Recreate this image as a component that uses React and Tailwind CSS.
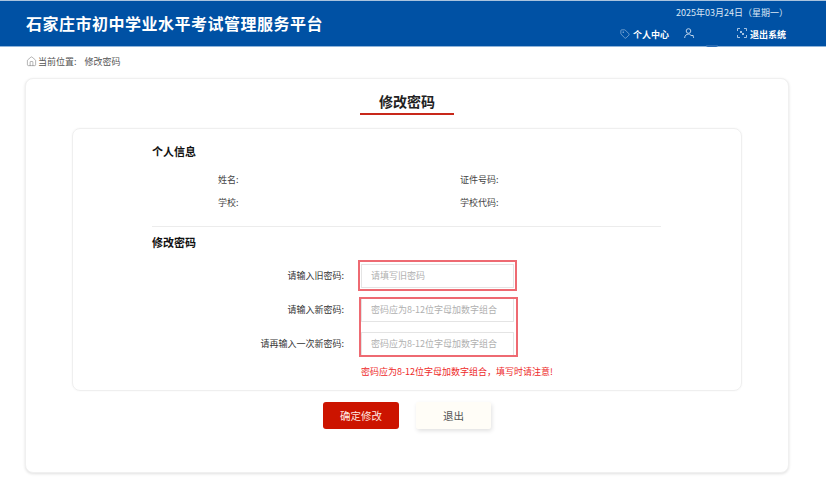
import { Home, Tag } from 'lucide-react';

const INFO_ROWS = [
  ['姓名:', '证件号码:'],
  ['学校:', '学校代码:'],
];

function PasswordRow({ label, placeholder }) {
  return (
    <div className="flex h-[24px] items-center">
      <label className="w-[192px] text-right text-[9px] text-[#333]">{label}</label>
      <div className="ml-[17px] flex h-full w-[153px] items-center border border-[#e4e4e4] bg-white pl-[9px] text-[9px] text-[#b0b0b0]">
        {placeholder}
      </div>
    </div>
  );
}

function UserIcon() {
  return (
    <svg width="11" height="11" viewBox="0 0 11 11" fill="none" stroke="currentColor" strokeWidth="0.9" className="ml-[15px] -translate-y-[2px] text-[#cfe0f2]">
      <circle cx="4.5" cy="3" r="2.3" />
      <path d="M0.7 10c0-2.4 1.6-3.9 3.8-3.9 0.8 0 1.4 0.2 2 0.5" />
      <path d="M6.5 7.5h3M8 7.5c1 0 1.6 0.9 1.6 2.4" />
    </svg>
  );
}

function ExitIcon() {
  return (
    <svg width="10" height="10" viewBox="0 0 10 10" fill="none" stroke="currentColor" strokeWidth="0.8" className="ml-[42px] mr-[3px] -translate-y-[2px] text-[#cfe0f2]">
      <path d="M0.5 3V0.5H3M7 0.5h2.5V3M9.5 7v2.5H7M3 9.5H0.5V7" />
      <path d="M3 3l1.5 1.5M4.5 3v1.5H3M7 7L5.5 5.5M5.5 7V5.5H7" />
    </svg>
  );
}

export default function App() {
  return (
    <div className="h-[481px] w-[826px] overflow-hidden bg-white font-['Noto_Sans_CJK_SC','Liberation_Sans',sans-serif]">
      {/* Header */}
      <header className="relative flex h-[47px] items-start justify-between border-y border-t-[#a9c3de] border-b-[#8fb4da] bg-[#0051a4] pl-[26px] pr-[40px]">
        <h1 className="mt-[12px] text-[16px] font-bold leading-[20px] tracking-[0.5px] text-white">
          石家庄市初中学业水平考试管理服务平台
        </h1>
        <div className="flex flex-col items-end text-white">
          <p className="-mr-[2px] mt-[5px] text-[9px] leading-[14px] text-[#dbe7f5]">2025年03月24日（星期一）</p>
          <div className="mt-[9px] flex items-center text-[9px] font-bold leading-[12px]">
            <Tag size={10} strokeWidth={1.2} className="mr-[3px] -translate-y-[1px] text-[#cfe0f2]" />
            <span>个人中心</span>
            <UserIcon />
            <ExitIcon />
            <span>退出系统</span>
          </div>
        </div>
        <div className="absolute left-[706px] top-[44px] h-[2px] w-[12px] rounded-b-full bg-[#2a6cb4]" />
      </header>

      {/* Breadcrumb */}
      <div className="flex h-[31px] items-center pb-[2px] pl-[26px] text-[9px] text-[#555]">
        <Home size={11} strokeWidth={1.2} className="mr-[1px] text-[#777]" />
        <span>当前位置:</span>
        <span className="ml-[8px]">修改密码</span>
      </div>

      {/* Card */}
      <main className="ml-[25px] h-[395px] w-[764px] rounded-[8px] border border-[#f0f0f0] bg-white pt-[12px] shadow-[0_1px_3px_rgba(0,0,0,0.12)]">
        <div className="flex flex-col items-center">
          <h2 className="text-[14px] font-bold leading-[20px] text-[#222]">修改密码</h2>
          <div className="mt-[2px] h-[2px] w-[94px] bg-[#c8281a]" />
        </div>

        <section className="ml-[46px] mt-[13px] h-[263px] w-[670px] rounded-[8px] border border-[#efefef] pl-[79px] pt-[15px] shadow-[0_0_2px_rgba(0,0,0,0.05)]">
          <h3 className="text-[11px] font-bold leading-[14px] text-[#111]">个人信息</h3>

          <div className="mt-[17px] flex flex-col gap-[13px] pl-[66px]">
            {INFO_ROWS.map(([left, right]) => (
              <div key={left} className="flex text-[9px] leading-[10px] text-[#444]">
                <span className="w-[242px]">{left}</span>
                <span>{right}</span>
              </div>
            ))}
          </div>

          <div className="mt-[18px] h-px w-[509px] bg-[#ececec]" />

          <h3 className="mt-[8px] text-[11px] font-bold leading-[14px] text-[#111]">修改密码</h3>

          <form className="relative mt-[15px]">
            <div className="flex flex-col gap-[10px]">
              <PasswordRow label="请输入旧密码:" placeholder="请填写旧密码" />
              <PasswordRow label="请输入新密码:" placeholder="密码应为8-12位字母加数字组合" />
              <PasswordRow label="请再输入一次新密码:" placeholder="密码应为8-12位字母加数字组合" />
            </div>
            {/* Red annotation boxes drawn over the inputs */}
            <div className="absolute left-[206px] top-[-4px] h-[31px] w-[159px] border-2 border-[#ee6a72]" />
            <div className="absolute left-[207px] top-[33px] h-[60px] w-[159px] border-2 border-[#ee6a72]" />
          </form>

          <p className="ml-[209px] mt-[10px] text-[9px] leading-[12px] text-[#ee2a2a]">
            密码应为8-12位字母加数字组合，填写时请注意!
          </p>
        </section>

        <div className="mt-[11px] flex justify-center gap-[17px]">
          <button className="h-[27px] w-[76px] rounded-[3px] bg-[#cc1400] text-[10.5px] text-[#ffe9e2]">确定修改</button>
          <button className="h-[27px] w-[75px] rounded-[2px] bg-[#fffdf7] text-[10.5px] text-[#555] shadow-[1px_2px_4px_rgba(0,0,0,0.12)]">退出</button>
        </div>
      </main>
    </div>
  );
}
